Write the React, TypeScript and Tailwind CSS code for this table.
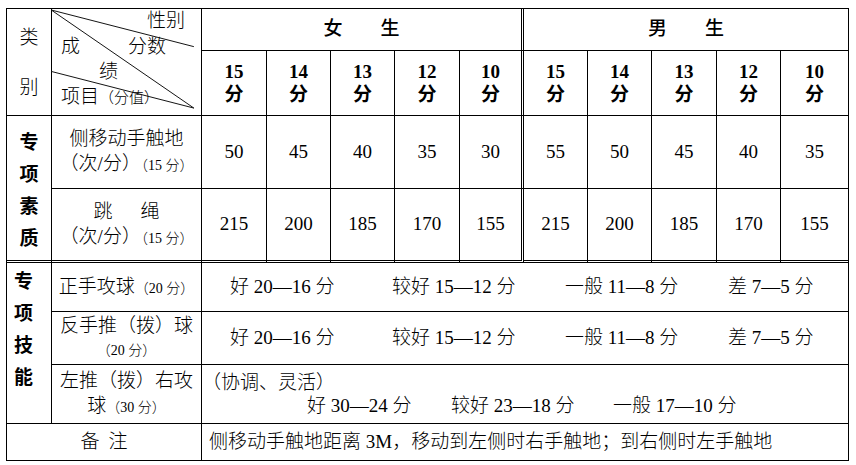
import React from "react";

const cell = "border-r border-b border-black flex items-center justify-center";
const femaleRun = ["50", "45", "40", "35", "30"];
const maleRun = ["55", "50", "45", "40", "35"];
const rope = ["215", "200", "185", "170", "155"];
const scores = ["15", "14", "13", "12", "10"];

function Small({ children }: { children: React.ReactNode }) {
  return <span className="text-[14px]">{children}</span>;
}

function NumberRow({ female, male, last }: { female: string[]; male: string[]; last?: boolean }) {
  const bottom = last ? "border-b-[3px] border-double" : "";
  return (
    <>
      {female.map((v, i) => (
        <div
          key={"f" + i}
          className={`${cell} ${bottom} ${i === 4 ? "border-r-[3px] border-double" : ""}`}
        >
          {v}
        </div>
      ))}
      {male.map((v, i) => (
        <div key={"m" + i} className={`${cell} ${bottom}`}>
          {v}
        </div>
      ))}
    </>
  );
}

function Grades({ items }: { items: string[] }) {
  return (
    <div className={`${cell} col-span-10 justify-start pl-[28px]`}>
      <span className="w-[162px]">{items[0]}</span>
      <span className="w-[173px]">{items[1]}</span>
      <span className="w-[163px]">{items[2]}</span>
      <span>{items[3]}</span>
    </div>
  );
}

export default function App() {
  const grades = ["好 20—16 分", "较好 15—12 分", "一般 11—8 分", "差 7—5 分"];
  return (
    <div className="min-h-screen bg-white pt-2 pl-[6px] text-black text-[19px] font-light font-['Liberation_Serif','Noto_Sans_CJK_SC',serif]">
      <div className="grid w-fit border-l border-t border-black grid-cols-[45px_150px_65px_64px_64px_65px_64px_64px_64px_65px_64px_68px] grid-rows-[42px_65px_73px_74px_49px_53px_59px_37px]">
        {/* header */}
        <div className={`${cell} row-span-2 flex-col justify-start pt-[4px] leading-[50px]`}>
          <span>类</span>
          <span>别</span>
        </div>
        <div className="row-span-2 border-r border-b border-black relative">
          <svg className="absolute inset-0 w-full h-full overflow-visible" viewBox="0 0 150 107">
            <line x1="-1" y1="1" x2="143" y2="38" stroke="#111" strokeWidth="1" />
            <line x1="-1" y1="1" x2="143" y2="100" stroke="#111" strokeWidth="1" />
            <line x1="-1" y1="63" x2="143" y2="100" stroke="#111" strokeWidth="1" />
          </svg>
          <span className="absolute left-[95px] top-[2px] leading-[19px]">性别</span>
          <span className="absolute left-[76px] top-[28px] leading-[19px]">分数</span>
          <span className="absolute left-[9px] top-[28px] leading-[19px]">成</span>
          <span className="absolute left-[47px] top-[53px] leading-[19px]">绩</span>
          <span className="absolute left-[9px] top-[78px] leading-[19px] whitespace-nowrap">
            项目<span className="text-[15px]">（分值）</span>
          </span>
        </div>
        <div className={`${cell} col-span-5 border-r-[3px] border-double font-medium`}>女　　生</div>
        <div className={`${cell} col-span-5 font-medium`}>男　　生</div>
        {[...scores, ...scores].map((s, i) => (
          <div
            key={i}
            className={`${cell} flex-col font-semibold leading-[23px] ${i === 4 ? "border-r-[3px] border-double" : ""}`}
          >
            <span className="font-bold">{s}</span>
            <span>分</span>
          </div>
        ))}

        {/* 专项素质 */}
        <div className={`${cell} row-span-2 flex-col justify-start pt-[11px] leading-[32px] font-semibold border-b-[3px] border-double`}>
          <span>专</span>
          <span>项</span>
          <span>素</span>
          <span>质</span>
        </div>
        <div className={`${cell} flex-col leading-[25px]`}>
          <span>侧移动手触地</span>
          <span>
            （次/分）<Small>（15 分）</Small>
          </span>
        </div>
        <NumberRow female={femaleRun} male={maleRun} />
        <div className={`${cell} flex-col leading-[25px] border-b-[3px] border-double`}>
          <span>
            <span className="mr-[28px]">跳</span>绳
          </span>
          <span>
            （次/分）<Small>（15 分）</Small>
          </span>
        </div>
        <NumberRow female={rope} male={rope} last />

        {/* 专项技能 */}
        <div className={`${cell} row-span-3 flex-col items-start justify-start pl-[7px] pt-[3px] leading-[32px] font-semibold`}>
          <span>专</span>
          <span>项</span>
          <span>技</span>
          <span>能</span>
        </div>
        <div className={cell}>
          <span>
            正手攻球<Small>（20 分）</Small>
          </span>
        </div>
        <Grades items={grades} />
        <div className={`${cell} flex-col leading-[25px]`}>
          <span>反手推（拨）球</span>
          <Small>（20 分）</Small>
        </div>
        <Grades items={grades} />
        <div className={`${cell} flex-col leading-[25px]`}>
          <span>左推（拨）右攻</span>
          <span>
            球<Small>（30 分）</Small>
          </span>
        </div>
        <div className={`${cell} col-span-10 flex-col items-start leading-[23px]`}>
          <span>（协调、灵活）</span>
          <div className="flex pl-[105px]">
            <span className="w-[144px]">好 30—24 分</span>
            <span className="w-[162px]">较好 23—18 分</span>
            <span>一般 17—10 分</span>
          </div>
        </div>

        {/* 备注 */}
        <div className={`${cell} col-span-2`}>
          <span className="mr-[9px]">备</span>注
        </div>
        <div className={`${cell} col-span-10 justify-start pl-[7px]`}>
          侧移动手触地距离 3M，移动到左侧时右手触地；到右侧时左手触地
        </div>
      </div>
    </div>
  );
}
